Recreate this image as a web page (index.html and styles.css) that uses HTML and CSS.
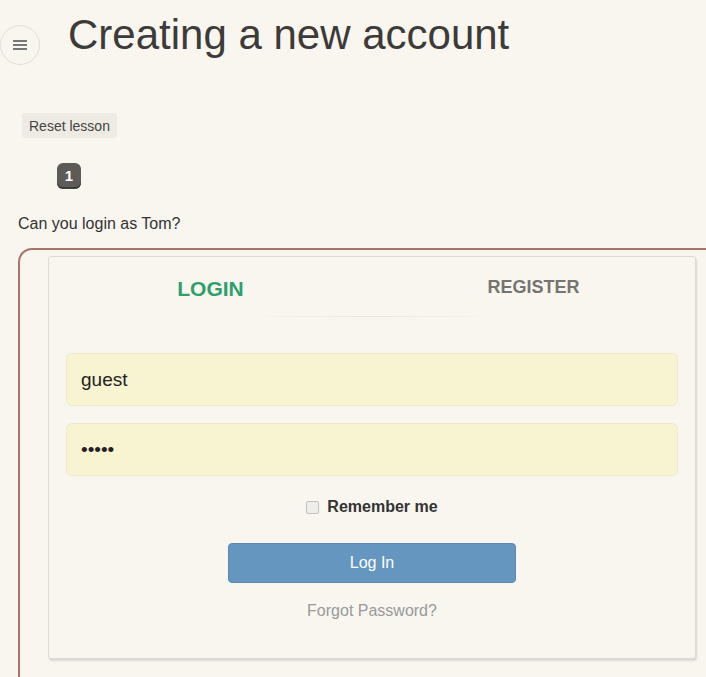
FILE: index.html
```html
<!DOCTYPE html>
<html>
<head>
<meta charset="utf-8">
<link rel="stylesheet" href="styles.css">
</head>
<body>
<header class="header">
  <button class="menu-btn" aria-label="Menu">
    <svg width="14" height="12" viewBox="0 0 14 12"><rect x="0" y="1" width="14" height="2" fill="#777"/><rect x="0" y="5" width="14" height="2" fill="#777"/><rect x="0" y="9" width="14" height="2" fill="#777"/></svg>
  </button>
  <h1 class="title">Creating a new account</h1>
</header>
<main class="content">
  <button class="reset-btn">Reset lesson</button>
  <div class="steps"><span class="step-badge">1</span></div>
  <p class="question">Can you login as Tom?</p>
  <section class="frame">
    <div class="card">
      <div class="tabs">
        <div class="tab tab-active">LOGIN</div>
        <div class="tab tab-inactive">REGISTER</div>
      </div>
      <div class="tab-line"></div>
      <form class="form">
        <input class="field" type="text" value="guest">
        <input class="field" type="password" value="guest">
        <label class="remember"><input type="checkbox" class="check"><span>Remember me</span></label>
        <button type="button" class="login-btn">Log In</button>
        <a class="forgot">Forgot Password?</a>
      </form>
    </div>
  </section>
</main>
</body>
</html>
```
FILE: styles.css
```css
* { box-sizing: border-box; }
html, body { margin: 0; padding: 0; }
body {
  background: #f9f6f0;
  font-family: "Liberation Sans", Arial, sans-serif;
  color: #333;
  width: 706px;
  height: 677px;
  overflow: hidden;
}
.header {
  display: flex;
  align-items: flex-start;
}
.menu-btn {
  width: 40px;
  height: 40px;
  margin-top: 25px;
  border: 1px solid #e2ded7;
  border-radius: 50%;
  background: transparent;
  padding: 0;
  display: flex;
  align-items: center;
  justify-content: center;
  flex: none;
}
.title {
  margin: 11px 0 0 28px;
  font-size: 42px;
  line-height: 48px;
  font-weight: normal;
  color: #3d3b39;
}
.content {
  padding: 0 0 0 18px;
}
.reset-btn {
  margin: 48px 0 0 4px;
  height: 25px;
  padding: 0 7px;
  border: none;
  border-radius: 3px;
  background: #eeebe4;
  color: #444;
  font-family: "Liberation Sans", Arial, sans-serif;
  font-size: 14px;
  display: block;
}
.steps {
  margin: 25px 0 0 39px;
  height: 26px;
}
.step-badge {
  display: inline-flex;
  align-items: center;
  justify-content: center;
  width: 24px;
  height: 26px;
  padding-bottom: 2px;
  background: #5d5b58;
  border-radius: 6px;
  box-shadow: inset 0 -2px 0 #3f3d3b;
  color: #fff;
  font-weight: bold;
  font-size: 15px;
}
.question {
  margin: 25px 0 0 0;
  font-size: 16px;
  line-height: 20px;
  color: #333;
}
.frame {
  margin-top: 14px;
  width: 720px;
  height: 460px;
  border: 2px solid #a8746c;
  border-radius: 14px;
  padding: 6px 0 0 28px;
}
.card {
  width: 648px;
  height: 403px;
  border: 1px solid #dedad3;
  border-radius: 3px;
  box-shadow: 1px 2px 2px rgba(0,0,0,0.12);
  background: #f9f6f0;
  display: flex;
  flex-direction: column;
}
.tabs {
  display: flex;
  height: 59px;
}
.tab {
  flex: 1;
  text-align: center;
  font-weight: bold;
  line-height: 24px;
}
.tab-active {
  color: #2fa06b;
  font-size: 21px;
  padding-top: 20px;
}
.tab-inactive {
  color: #767470;
  font-size: 18px;
  padding-top: 18px;
}
.tab-line {
  height: 1px;
  background: linear-gradient(to right, rgba(230,225,215,0) 30%, #e8e3da 50%, rgba(230,225,215,0) 70%);
}
.form {
  display: flex;
  flex-direction: column;
  align-items: center;
  padding: 36px 17px 0 17px;
}
.field {
  width: 100%;
  height: 53px;
  border: 1px solid #efe9c9;
  border-radius: 6px;
  background: #f8f3d1;
  padding: 0 14px;
  font-family: "Liberation Sans", Arial, sans-serif;
  font-size: 19px;
  color: #222;
  margin-bottom: 17px;
  outline: none;
}
.remember {
  display: flex;
  align-items: center;
  gap: 8px;
  margin-top: 2px;
  height: 24px;
  font-weight: bold;
  font-size: 16px;
  color: #333;
}
.check {
  -webkit-appearance: none;
  appearance: none;
  width: 13px;
  height: 13px;
  margin: 0;
  border: 1px solid #c4c1bc;
  border-radius: 2px;
  background: #efede9;
}
.login-btn {
  margin-top: 24px;
  width: 288px;
  height: 40px;
  background: #6496c0;
  border: 1px solid #5a89b2;
  border-radius: 4px;
  color: #fff;
  font-family: "Liberation Sans", Arial, sans-serif;
  font-size: 16px;
}
.forgot {
  margin-top: 18px;
  font-size: 16px;
  line-height: 20px;
  color: #999;
}
```
